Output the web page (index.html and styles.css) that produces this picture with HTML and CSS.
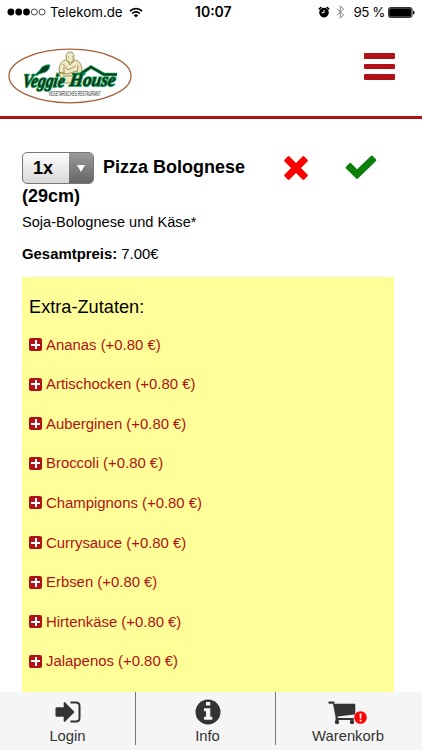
FILE: index.html
```html
<!DOCTYPE html>
<html lang="de">
<head>
  <meta charset="UTF-8">
  <meta name="viewport" content="width=device-width, initial-scale=1.0">
  <title>Veggie House</title>
  <link rel="stylesheet" href="styles.css">
</head>
<body>

  <!-- Status bar -->
  <div class="statusbar">
    <div class="status-left">
      <svg class="signal" width="39" height="8" viewBox="0 0 39 8">
        <circle cx="3.9" cy="4" r="3.4"/>
        <circle cx="11.7" cy="4" r="3.4"/>
        <circle cx="19.5" cy="4" r="3.4"/>
        <circle class="empty" cx="27.3" cy="4" r="3"/>
        <circle class="empty" cx="35.1" cy="4" r="3"/>
      </svg>
      <span class="carrier">Telekom.de</span>
      <svg class="wifi" width="14" height="11" viewBox="0 0 14 11">
        <path d="M.9 4.1a8.7 8.7 0 0 1 12.2 0M3.1 6.5a5.6 5.6 0 0 1 7.8 0" fill="none" stroke="#000" stroke-width="1.7"/>
        <path d="M7 10.6 4.8 8.3a3.2 3.2 0 0 1 4.4 0z"/>
      </svg>
    </div>
    <span class="time">10:07</span>
    <div class="status-right">
      <svg class="alarm" width="12" height="12" viewBox="0 0 12 12">
        <circle cx="6" cy="6.6" r="4.8"/>
        <path d="M.8 3.3 3.4 1M11.2 3.3 8.6 1" stroke="#000" stroke-width="1.6"/>
        <path d="M6 3.8v2.9H3.6" fill="none" stroke="#fff"/>
      </svg>
      <svg class="bluetooth" width="9" height="14" viewBox="0 0 9 14">
        <path d="M.8 3.8 7.7 10 4.3 13V1l3.4 3L.8 10.2" fill="none" stroke="#888"/>
      </svg>
      <span class="percent">95 %</span>
      <svg class="battery" width="27" height="11" viewBox="0 0 27 11">
        <rect x=".5" y=".5" width="23.6" height="10" rx="1.8" fill="none" stroke="#333"/>
        <rect x="1.2" y="1.2" width="22.2" height="8.6" rx="1"/>
        <path d="M25 3.5q1.7.4 1.7 2T25 7.5z"/>
      </svg>
    </div>
  </div>

  <header class="header">
    <svg class="logo" width="124" height="56" viewBox="0 0 124 56">
      <ellipse cx="62" cy="28" rx="61" ry="26.8" fill="#fff" stroke="#a85f3c" stroke-width="1.3"/>
      <!-- seated figure -->
      <g fill="#efe8c4" stroke="#8d7e3c" stroke-width=".8">
        <path d="M51 21q1-8 7-9l4-1 5 1q6 1 7 9l-1 14H53z"/>
        <path d="M58 9q0-5 4-5t4 5q0 5-4 6-4-1-4-6z"/>
        <path d="M55 16l5 6 8-4M51 24l8 2 10-3M48 25h8M60 13l2 4 4-4M60 9h1m3 0h1M56 19v10M70 17l-1 11M57 28h10" fill="none"/>
      </g>
      <!-- roof and leaf -->
      <path d="M71 27 83 19l13 7.500h13" fill="none" stroke="#12a552" stroke-width="3.400"/>
      <path d="M71 27 83 19l13 7.500h13" fill="none" stroke="#0b3b22" stroke-width="2"/>
      <path d="M28 26q4-3 6-7 5-3 8-2 -1 7-8 8-4 1-6 3z" fill="#0b3b22" stroke="#12a552"/>
      <text class="logo-name" transform="translate(14 39) skewX(-8)" textLength="42" lengthAdjust="spacingAndGlyphs">Veggie</text>
      <text class="logo-name" transform="translate(61 38) skewX(-8)" textLength="46" lengthAdjust="spacingAndGlyphs">House</text>
      <text class="logo-sub" x="40.500" y="47.500" textLength="52" lengthAdjust="spacingAndGlyphs">VEGETARISCHES RESTAURANT</text>
    </svg>
    <div class="menu-btn">
      <span></span>
      <span></span>
      <span></span>
    </div>
  </header>

  <main class="content">
    <div class="dish">
      <h1 class="dish-title">
        <span class="amount"><span class="amount-value">1x</span><span class="amount-arrow"></span></span>
        Pizza Bolognese (29cm)
      </h1>
      <svg class="cancel" width="26" height="26" viewBox="0 0 26 26">
        <g transform="rotate(45 13 13)" fill="#f00">
          <rect x="-1" y="9.500" width="28" height="7" rx="1.300"/>
          <rect x="9.500" y="-1" width="7" height="28" rx="1.300"/>
        </g>
      </svg>
      <svg class="confirm" width="32" height="25" viewBox="0 0 32 25">
        <path d="M1 11.700 4.300 8.300q.9-.8 1.800 0l6 5.900L25.900.9q.9-.8 1.800 0L31 4.200q.8.900 0 1.800L13 23.600q-.9.800-1.800 0L1 13.500q-.8-.9 0-1.800z" fill="#0a800a"/>
      </svg>
    </div>
    <p class="description">Soja-Bolognese und Käse*</p>
    <p class="total"><b>Gesamtpreis:</b> 7.00€</p>

    <section class="extras">
      <h2>Extra-Zutaten:</h2>
      <ul>
        <li><i class="plus"></i><span>Ananas (+0.80 €)</span></li>
        <li><i class="plus"></i><span>Artischocken (+0.80 €)</span></li>
        <li><i class="plus"></i><span>Auberginen (+0.80 €)</span></li>
        <li><i class="plus"></i><span>Broccoli (+0.80 €)</span></li>
        <li><i class="plus"></i><span>Champignons (+0.80 €)</span></li>
        <li><i class="plus"></i><span>Currysauce (+0.80 €)</span></li>
        <li><i class="plus"></i><span>Erbsen (+0.80 €)</span></li>
        <li><i class="plus"></i><span>Hirtenkäse (+0.80 €)</span></li>
        <li><i class="plus"></i><span>Jalapenos (+0.80 €)</span></li>
      </ul>
    </section>
  </main>

  <nav class="bottom-nav">
    <div class="nav-item">
      <svg width="26" height="26" viewBox="0 0 26 26">
        <path d="M.5 9.200q0-1 1-1h7.200V4q.3-1.500 1.500-.6l8.700 8.800q.7.800 0 1.600l-8.700 8.800q-1.200.9-1.500-.6v-4.200H1.500q-1 0-1-1z"/>
        <path d="M15.500 3.600H21q3.500 0 3.500 3.500v11.800q0 3.500-3.500 3.500h-5.500" fill="none" stroke="#333" stroke-width="2"/>
      </svg>
      <span>Login</span>
    </div>
    <div class="nav-item">
      <svg width="26" height="26" viewBox="0 0 26 26">
        <circle cx="13" cy="13" r="12.500"/>
        <path d="M11 3h4.300v3.500H11zM9 9.300h6.300v8.500h2v3H9v-3h2v-5.500H9z" fill="#f5f5f5"/>
      </svg>
      <span>Info</span>
    </div>
    <div class="nav-item">
      <div class="cart">
        <svg width="28" height="26" viewBox="0 0 28 26">
          <path d="M6 4.700h20.300q1 0 1 1v8.800q0 1-1 1.100L9.500 17.500l.3 1.500H25q1 .2 1 1t-1 1H8.500q-1.200-.2-1.200-1.300l.3-1.500L5 4.700H1.300q-1-.2-1-1.100t1-1h4.200q1 .1 1.200 1z"/>
          <circle cx="9" cy="23" r="2.200"/>
          <circle cx="24" cy="23" r="2.200"/>
        </svg>
        <svg class="badge" width="13" height="13" viewBox="0 0 13 13">
          <circle cx="6.500" cy="6.500" r="6.300" fill="#f00"/>
          <path d="M5.500 2.500h2L7.200 7.700H5.800zM5.600 8.700h1.800v1.800H5.600z" fill="#fff"/>
        </svg>
      </div>
      <span>Warenkorb</span>
    </div>
  </nav>

</body>
</html>
```
FILE: styles.css
```css
:root {
  --red: #b01116;
  --yellow: #ffff99;
  --bar: #f5f5f5;
  --dark: #333;
}

* {
  box-sizing: border-box;
  margin: 0;
  padding: 0;
}

body {
  height: 750px;
  display: flex;
  flex-direction: column;
  overflow: hidden;
  background: #fff;
  color: #000;
  font-family: "Liberation Sans", Arial, sans-serif;
}

svg {
  display: block;
  flex: none;
  overflow: visible;
}

/* Status bar */
.statusbar {
  display: grid;
  grid-template-columns: 188px 1fr auto;
  align-items: center;
  height: 24px;
  padding: 0 7px;
  font-family: Inter, "Liberation Sans", sans-serif;
  font-size: 13.300px;
  line-height: 16px;
  white-space: nowrap;
}

.status-left,
.status-right {
  display: flex;
  align-items: center;
}

.signal .empty {
  fill: none;
  stroke: #000;
  stroke-width: .7;
}

.carrier {
  margin: 0 6px 0 4px;
}

.time {
  font-size: 14px;
  font-weight: 600;
}

.bluetooth {
  margin: 0 8px 0 6px;
}

.percent {
  margin-right: 3px;
  letter-spacing: -.4px;
}

/* Header */
.header {
  display: flex;
  justify-content: space-between;
  height: 95px;
  padding: 24px 27px 0 8px;
  border-bottom: 3px solid var(--red);
}

.logo-name {
  font: italic bold 19px "Liberation Serif", serif;
  fill: #0b3b22;
  stroke: #12a552;
  stroke-width: 1.6px;
  paint-order: stroke;
}

.logo-sub {
  font: 6.500px "Liberation Sans", sans-serif;
  fill: #222;
}

.menu-btn {
  display: flex;
  flex-direction: column;
  gap: 5px;
  width: 31px;
  padding-top: 5px;
}

.menu-btn span {
  height: 5.500px;
  border-radius: 1px;
  background: var(--red);
}

/* Dish */
.content {
  flex: 1;
  display: flex;
  flex-direction: column;
  min-height: 0;
  padding: 33px 28px 0 22px;
}

.dish {
  display: flex;
  align-items: flex-start;
}

.dish-title {
  width: 240px;
  font-size: 18px;
  line-height: 25px;
}

.amount {
  display: inline-flex;
  width: 72px;
  height: 32px;
  margin-right: 4px;
  vertical-align: middle;
  border: 1px solid #777;
  border-radius: 5px;
  overflow: hidden;
  background: linear-gradient(#fdfdfd, #d8d8d8);
}

.amount-value {
  flex: 1;
  align-self: center;
  padding-left: 10px;
  line-height: 20px;
}

.amount-arrow {
  display: flex;
  justify-content: center;
  align-items: center;
  width: 24px;
  background: linear-gradient(#999, #666);
}

.amount-arrow::after {
  content: "";
  border: 4px solid transparent;
  border-top: 7px solid #fff;
  border-bottom: 0;
}

.cancel {
  margin: 3px 0 0 21px;
}

.confirm {
  margin: 3px 0 0 36px;
}

.description,
.total {
  font-size: 14.900px;
  line-height: 18px;
}

.description {
  margin-top: 4px;
  font-size: 14.600px;
}

.total {
  margin-top: 14px;
}

/* Extras */
.extras {
  flex: 1;
  min-height: 0;
  margin-top: 14px;
  padding: 19px 7px 0;
  overflow: hidden;
  background: var(--yellow);
}

.extras h2 {
  font-size: 18.200px;
  font-weight: normal;
  line-height: 22px;
}

.extras ul {
  padding-top: 7px;
  list-style: none;
}

.extras li {
  display: flex;
  align-items: center;
  gap: 4px;
  height: 39.550px;
  color: var(--red);
  font-size: 14.900px;
}

.plus {
  width: 13px;
  height: 13px;
  border-radius: 2px;
  background:
    linear-gradient(#fff, #fff) center / 9px 2px no-repeat,
    linear-gradient(#fff, #fff) center / 2px 9px no-repeat,
    var(--red);
}

/* Bottom nav */
.bottom-nav {
  display: grid;
  grid-template-columns: 135px 140px 1fr;
  height: 58px;
  padding-bottom: 5px;
  background: var(--bar);
  color: var(--dark);
  fill: var(--dark);
  font-size: 15px;
}

.nav-item {
  display: flex;
  flex-direction: column;
  align-items: center;
  padding-top: 7px;
}

.nav-item + .nav-item {
  border-left: 1px solid #777;
}

.nav-item:nth-child(2) {
  padding-left: 4px;
}

.nav-item:last-child {
  padding-right: 2px;
}

.nav-item > span {
  margin-top: 3px;
  font-size: 14.800px;
  line-height: 17px;
}

.cart {
  position: relative;
  right: 6px;
}

.badge {
  position: absolute;
  left: 26px;
  top: 12px;
}
```
